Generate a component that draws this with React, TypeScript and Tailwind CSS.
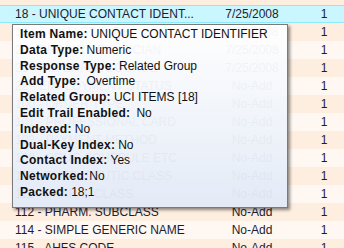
const rows = [
  { name: '17 - PHYSICIAN OTHER', value: 'No-Add' },
  { name: '18 - UNIQUE CONTACT IDENT...', value: '7/25/2008', selected: true },
  { name: '19 - CONTACT TYPE', value: '7/25/2008' },
  { name: '20 - PRIMARY PHYSICIAN', value: '7/25/2008' },
  { name: '21 - REFERRAL SOURCE', value: '7/25/2008' },
  { name: '22 - EMPLOYMENT STATUS', value: 'No-Add' },
  { name: '100 - ORDER TYPE', value: 'No-Add' },
  { name: '101 - PROFESSIONAL CARD', value: 'No-Add' },
  { name: '102 - PAYMENT METHOD', value: 'No-Add' },
  { name: '108 - DRUG SCHEDULE ETC', value: 'No-Add' },
  { name: '110 - THERAPEUTIC CLASS', value: 'No-Add' },
  { name: '111 - PHARM. CLASS', value: 'No-Add' },
  { name: '112 - PHARM. SUBCLASS', value: 'No-Add' },
  { name: '114 - SIMPLE GENERIC NAME', value: 'No-Add' },
  { name: '115 - AHFS CODE', value: 'No-Add' },
]

const details: { label: string; value: string; gap: string }[] = [
  { label: 'Item Name:', value: 'UNIQUE CONTACT IDENTIFIER', gap: 'ml-[3px]' },
  { label: 'Data Type:', value: 'Numeric', gap: 'ml-[3px]' },
  { label: 'Response Type:', value: 'Related Group', gap: 'ml-[3px]' },
  { label: 'Add Type:', value: 'Overtime', gap: 'ml-[6px]' },
  { label: 'Related Group:', value: 'UCI ITEMS [18]', gap: 'ml-[3px]' },
  { label: 'Edit Trail Enabled:', value: 'No', gap: 'ml-[6px]' },
  { label: 'Indexed:', value: 'No', gap: 'ml-[3px]' },
  { label: 'Dual-Key Index:', value: 'No', gap: 'ml-[3px]' },
  { label: 'Contact Index:', value: 'Yes', gap: 'ml-[3px]' },
  { label: 'Networked:', value: 'No', gap: 'ml-[1px]' },
  { label: 'Packed:', value: '18;1', gap: 'ml-[3px]' },
]

export default function App() {
  return (
    <div className="relative h-[248px] w-[344px] overflow-hidden bg-[#fff8f2] font-['Liberation_Sans',Arial,sans-serif] text-[12px] text-[#1c1c34]">
      {/* Item list */}
      <div className="-mt-[13px] flex flex-col">
        {rows.map((r, i) => (
          <div
            key={r.name}
            className={
              r.selected
                ? 'flex h-[18px] items-center border-y border-[#8fe9fa] bg-[#c9f6ff]'
                : i % 2 === 0
                  ? 'flex h-[18px] items-center bg-[#fdeee0]'
                  : 'flex h-[18px] items-center bg-[#fff8f2]'
            }
          >
            <div className="w-[197px] overflow-hidden whitespace-nowrap pl-[15px]">{r.name}</div>
            <div className="w-[110px] text-center">{r.value}</div>
            <div className="w-[34px] text-center">1</div>
          </div>
        ))}
      </div>

      {/* Tooltip */}
      <div className="absolute left-[12px] top-[24px] w-[276px] border border-[#7a7a7a] bg-gradient-to-b from-[rgba(255,255,255,0.96)] to-[rgba(226,234,247,0.96)] pb-[6px] pl-[7px] pt-[2px] text-[12px] leading-[15.8px] text-[#111] shadow-[2px_2px_3px_rgba(0,0,0,0.45)]">
        {details.map((d) => (
          <div key={d.label} className="whitespace-nowrap">
            <span className="font-bold tracking-[0.3px]">{d.label}</span>
            <span className={d.gap}>{d.value}</span>
          </div>
        ))}
      </div>
    </div>
  )
}
